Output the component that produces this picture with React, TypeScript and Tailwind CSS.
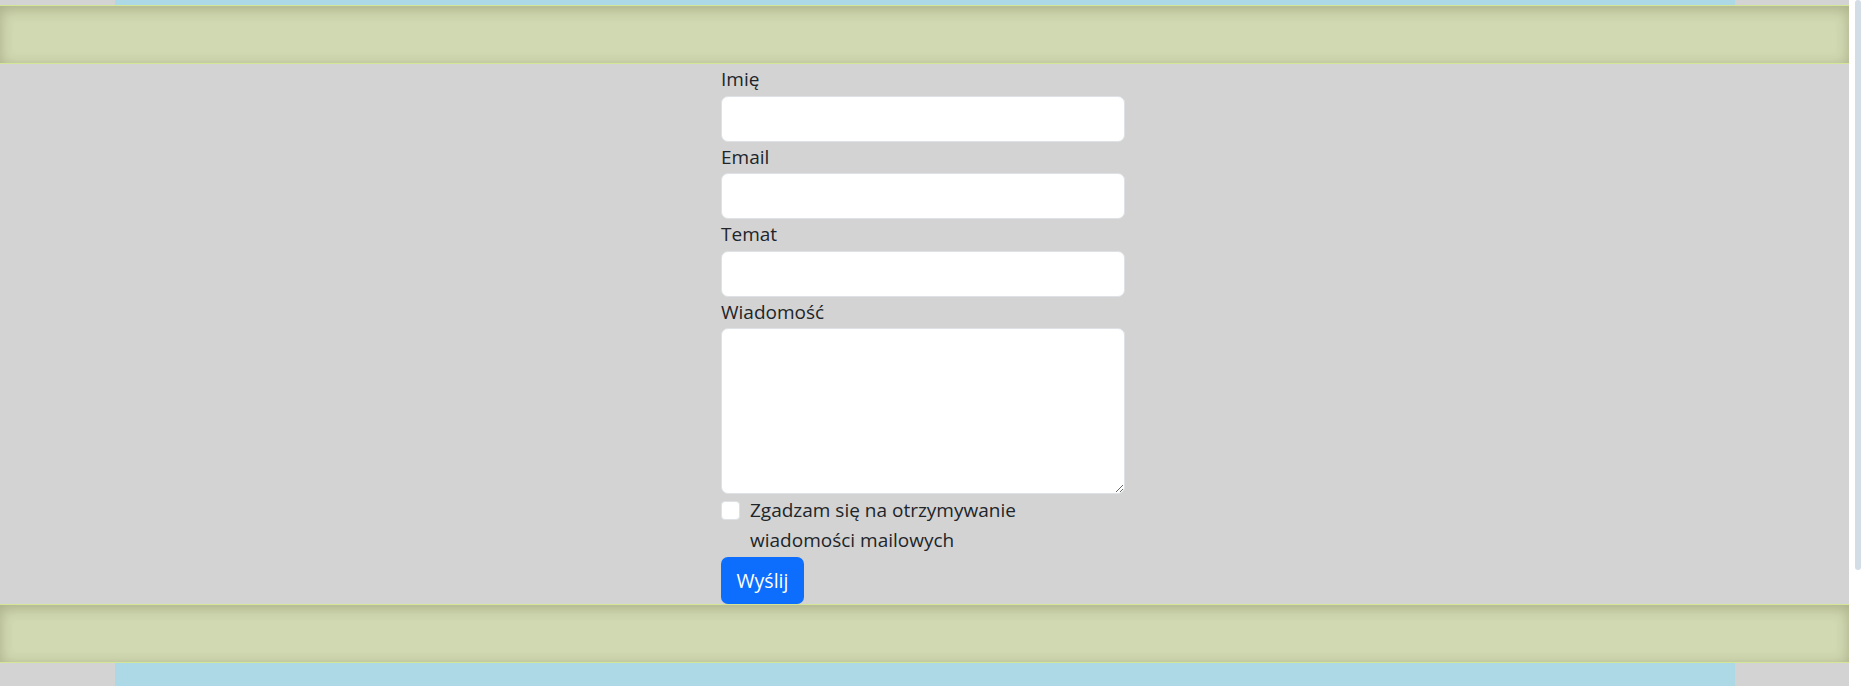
import { useState } from 'react';

const fields = [
  { id: 'name', label: 'Imię', type: 'text' },
  { id: 'email', label: 'Email', type: 'email' },
  { id: 'subject', label: 'Temat', type: 'text' },
];

function Band() {
  return (
    <div className="h-[60px] border-y border-[#d3e597] bg-[#d1d9b2] shadow-[inset_0_3px_14px_rgba(60,60,20,0.28)]" />
  );
}

export default function App() {
  const [agree, setAgree] = useState(false);

  return (
    <div
      className="flex h-[686px] w-full overflow-hidden bg-white text-[#212529]"
      style={{ fontFamily: '"Open Sans", "Noto Sans", sans-serif' }}
    >
      <div className="flex w-[1849px] shrink-0 flex-col bg-[#d3d3d3]">
        <div className="mx-auto h-[5px] w-[1620px] bg-[#add8e6]" />
        <Band />

        <div className="flex justify-center pr-[3px]">
          <form
            className="flex w-[404px] flex-col text-[19px]"
            onSubmit={(e) => e.preventDefault()}
          >
            {fields.map((f) => (
              <div key={f.id}>
                <label htmlFor={f.id} className="block pt-[1px] pb-[1.5px] leading-[29px]">
                  {f.label}
                </label>
                <input
                  id={f.id}
                  type={f.type}
                  className="block h-[46px] w-full rounded-[7px] border border-[#dee2e6] bg-white px-[14px] outline-none"
                />
              </div>
            ))}

            <label htmlFor="message" className="block pt-[1px] pb-[1px] leading-[29px]">
              Wiadomość
            </label>
            <textarea
              id="message"
              className="block h-[166px] w-full rounded-[7px] border border-[#dee2e6] bg-white px-[14px] py-[7px] outline-none"
            />

            <div className="mb-[2px] flex items-start pt-[1px]">
              <input
                id="agree"
                type="checkbox"
                checked={agree}
                onChange={(e) => setAgree(e.target.checked)}
                className="mt-[6px] h-[19px] w-[19px] shrink-0 appearance-none rounded-[4px] border border-[#dee2e6] bg-white"
              />
              <label htmlFor="agree" className="ml-[10px] w-[300px] leading-[30px]">
                Zgadzam się na otrzymywanie wiadomości mailowych
              </label>
            </div>

            <button
              type="submit"
              className="h-[47px] w-[83px] rounded-[7px] bg-[#0d6efd] text-[19.5px] text-white"
            >
              Wyślij
            </button>
          </form>
        </div>

        <Band />
        <div className="mx-auto h-[23px] w-[1620px] bg-[#add8e6]" />
      </div>

      <div className="flex w-[17px] shrink-0 pl-[6px]">
        <div className="h-[570px] w-[6px] rounded-full bg-[#d3dde6]" />
      </div>
    </div>
  );
}
